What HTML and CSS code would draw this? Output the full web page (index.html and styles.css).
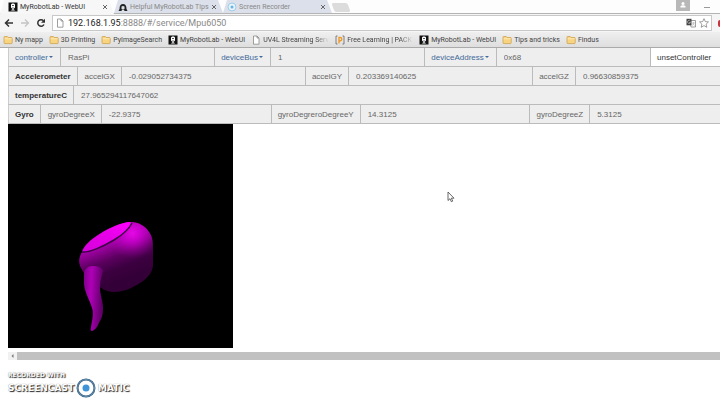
FILE: index.html
```html
<!DOCTYPE html>
<html lang="en">

<head>
    <meta charset="UTF-8">
    <meta name="viewport" content="width=device-width, initial-scale=1.0">
    <title>MyRobotLab - WebUI</title>

    <link rel="stylesheet" href="styles.css">
</head>

<body>
    <!-- shared icons -->
    <svg class="defs" width="0" height="0">
        <symbol id="folder" viewBox="0 0 10 10">
            <path d="M1 2.2q0-.7.7-.7h2.6l.9 1h3.2q.8 0 .8.8v4.500q0 .8-.8.8H1.8Q1 8.600 1 7.800z" fill="#f8d480" stroke="#c99a45" stroke-width=".7" />
            <path d="M1.600 3.800h7" stroke="#fff0c0" stroke-width=".8" />
        </symbol>
        <symbol id="robot" viewBox="0 0 10 10">
            <path d="M.5.5h9v9h-9z" fill="#111" />
            <path d="M4 1.500h2l1 1v3L6 6.500v1l1 1H3l1-1v-1L3 5.500v-3z" fill="#fff" />
            <path d="M4 3h.7v1H4zM5.300 3H6v1h-.7zM4.700 5h.6v3h-.6z" fill="#111" />
        </symbol>
        <symbol id="page" viewBox="0 0 10 10">
            <path d="M2.500 1h3.500l2 2v6.200h-5.500zM6 1v2h2" fill="#fff" stroke="#888" stroke-width=".8" />
        </symbol>
    </svg>

    <header class="browser">
        <div class="tabs">
            <a class="tab active" href="#">
                <svg class="icon"><use href="#robot" /></svg>
                <span>MyRobotLab - WebUI</span>
                <svg class="close" viewBox="0 0 6 6"><path d="M1 1l4 4M5 1L1 5" /></svg>
            </a>
            <a class="tab" href="#">
                <svg class="icon" viewBox="0 0 10 10">
                    <path d="M1.500 7Q1.500 2 5 2t3.500 5l1 2H6.500L6 7.500H4L3.500 9H.5z" fill="#222" />
                    <path d="M3.500 4.500Q5 3.500 6.500 4.500V7h-3z" fill="#dce0ea" />
                </svg>
                <span>Helpful MyRobotLab Tips</span>
                <svg class="close" viewBox="0 0 6 6"><path d="M1 1l4 4M5 1L1 5" /></svg>
            </a>
            <a class="tab" href="#">
                <svg class="icon" viewBox="0 0 10 10">
                    <circle cx="5" cy="5" r="4" fill="#e7f3fb" stroke="#8cc4e8" stroke-width=".8" />
                    <circle cx="5" cy="5" r="1.500" fill="#6bb2e2" />
                </svg>
                <span>Screen Recorder</span>
                <svg class="close" viewBox="0 0 6 6"><path d="M1 1l4 4M5 1L1 5" /></svg>
            </a>
            <button class="new-tab" aria-label="New tab"></button>
            <div class="window-buttons">
                <button class="user" aria-label="User">
                    <svg viewBox="0 0 14 11"><circle cx="7" cy="3.500" r="1.500" fill="#fff" /><path d="M4.500 7.500V6.500Q5 5.200 7 5.200t2.500 1.300v1z" fill="#fff" /></svg>
                </button>
                <button class="minimize" aria-label="Minimize"></button>
            </div>
        </div>

        <div class="toolbar">
            <button aria-label="Back"><svg viewBox="0 0 10 10"><path d="M9 5H1.500M5 1.500L1.500 5 5 8.500" fill="none" stroke="#333" stroke-width="1.500" /></svg></button>
            <button aria-label="Forward"><svg viewBox="0 0 10 10"><path d="M1 5h7.500M5 1.500L8.500 5 5 8.500" fill="none" stroke="#c4c4c4" stroke-width="1.300" /></svg></button>
            <button aria-label="Reload"><svg viewBox="0 0 10 10"><path d="M8 6.500A3.300 3.300 0 1 1 7.500 2.700" fill="none" stroke="#333" stroke-width="1.500" /><path d="M9 .8v4H5z" fill="#333" /></svg></button>
            <div class="address">
                <svg class="icon"><use href="#page" /></svg>
                <div class="url" role="textbox" aria-label="Address"><b>192.168.1.95</b>:8888/#/service/Mpu6050</div>
                <svg class="icon" viewBox="0 0 10 10">
                    <path d="M4 2.500h5.500v6.500H5z" fill="#fff" stroke="#777" stroke-width=".7" />
                    <path d="M.5.800h5v6.500h-5z" fill="#444" />
                    <path d="M4.500 3.200A1.600 1.600 0 1 0 4.600 4.500H3M6 5h3M7.500 4v1q0 2-1.500 2.500M6.800 5.500l1.700 2" fill="none" stroke="#bbb" stroke-width=".7" />
                </svg>
                <svg class="icon star" viewBox="0 0 10 10">
                    <path d="M5 .6l1.300 3 3.200.3-2.400 2.200.7 3.200L5 7.600 2.200 9.300l.7-3.200L.5 3.900l3.200-.3z" fill="#fff" stroke="#777" stroke-width=".7" />
                </svg>
            </div>
            <button class="extension" aria-label="Extension"></button>
        </div>

        <nav class="bookmarks">
            <a href="#"><svg class="icon"><use href="#folder" /></svg>Ny mapp</a>
            <a href="#"><svg class="icon"><use href="#folder" /></svg>3D Printing</a>
            <a href="#"><svg class="icon"><use href="#folder" /></svg>PyImageSearch</a>
            <a href="#"><svg class="icon"><use href="#robot" /></svg>MyRobotLab - WebUI</a>
            <a href="#"><svg class="icon"><use href="#page" /></svg><span class="fade">UV4L Streaming Serve</span></a>
            <a href="#">
                <svg class="icon" viewBox="0 0 10 10">
                    <path d="M2.500 1H1v8h1.500M7.500 1H9v8H7.500" fill="none" stroke="#666" stroke-width=".8" />
                    <path d="M4 8.500v-6h1.200a1.600 1.600 0 0 1 0 3.200H4" fill="none" stroke="#ee9a2b" stroke-width="1.400" />
                </svg>
                <span class="fade">Free Learning | PACKT</span>
            </a>
            <a href="#"><svg class="icon"><use href="#robot" /></svg>MyRobotLab - WebUI</a>
            <a href="#"><svg class="icon"><use href="#folder" /></svg>Tips and tricks</a>
            <a href="#"><svg class="icon"><use href="#folder" /></svg>Findus</a>
        </nav>
    </header>

    <main class="service">
        <div class="panel">
            <div class="row">
                <button class="dropdown" id="controller">controller</button>
                <input type="text" aria-labelledby="controller" value="RasPi">
                <button class="dropdown" id="deviceBus">deviceBus</button>
                <input type="text" aria-labelledby="deviceBus" value="1">
                <button class="dropdown" id="deviceAddress">deviceAddress</button>
                <input type="text" aria-labelledby="deviceAddress" value="0x68">
                <button class="unset">unsetController</button>
            </div>
            <div class="row">
                <strong>Accelerometer</strong>
                <label for="gx">accelGX</label>
                <input type="text" id="gx" value="-0.029052734375">
                <label for="gy">accelGY</label>
                <input type="text" id="gy" value="0.203369140625">
                <label for="gz">accelGZ</label>
                <input type="text" id="gz" value="0.96630859375">
            </div>
            <div class="row">
                <label for="temp"><b>temperatureC</b></label>
                <input type="text" id="temp" value="27.965294117647062">
            </div>
            <div class="row">
                <strong>Gyro</strong>
                <label for="dx">gyroDegreeX</label>
                <input type="text" id="dx" value="-22.9375">
                <label for="dy">gyroDegreroDegreeY</label>
                <input type="text" id="dy" value="14.3125">
                <label for="dz">gyroDegreeZ</label>
                <input type="text" id="dz" value="5.3125">
            </div>
        </div>

        <svg class="scene" viewBox="0 0 225 224">
            <defs>
                <linearGradient id="body" x1=".3" y1=".1" x2=".6" y2=".85">
                    <stop offset="0" stop-color="#a800a8" />
                    <stop offset=".3" stop-color="#a000a4" />
                    <stop offset=".55" stop-color="#5c0060" />
                    <stop offset=".75" stop-color="#3c0040" />
                    <stop offset="1" stop-color="#330037" />
                </linearGradient>
                <radialGradient id="shine" cx=".72" cy=".16" r=".36" gradientTransform="rotate(-18 .72 .16)">
                    <stop offset="0" stop-color="#e808e8" />
                    <stop offset=".4" stop-color="#d000d4" stop-opacity=".7" />
                    <stop offset="1" stop-color="#a000a4" stop-opacity="0" />
                </radialGradient>
                <linearGradient id="lid" x1="0" y1="1" x2="1" y2="0">
                    <stop offset="0" stop-color="#d800dc" />
                    <stop offset=".5" stop-color="#e400e6" />
                    <stop offset="1" stop-color="#ff00ff" />
                </linearGradient>
                <linearGradient id="spout" x1="0" y1="0" x2="1" y2=".15">
                    <stop offset="0" stop-color="#80008a" />
                    <stop offset=".4" stop-color="#b000b8" />
                    <stop offset="1" stop-color="#600068" />
                </linearGradient>
            </defs>
            <rect width="225" height="224" fill="#000" />
            <path d="M74 128C82 114 104 101 121 98C132 98 138 103 141 108C145 113 145 119 145 127V142C144 149 140 153 135 157C128 162 120 166 114 167C106 169 98 168 92 163C84 158 76 151 73 144C70 138 71 133 74 128Z" fill="url(#body)" />
            <path d="M74 128C82 114 104 101 121 98C132 98 138 103 141 108C145 113 145 119 145 127V142C144 149 140 153 135 157C128 162 120 166 114 167C106 169 98 168 92 163C84 158 76 151 73 144C70 138 71 133 74 128Z" fill="url(#shine)" />
            <path d="M74 128C76 117 104 100 121 98C126 99 121 106 106 116C96 122 81 129 74 128Z" fill="url(#lid)" />
            <path d="M74 128C81 129 96 122 106 116C116 110 121 105 124 99" fill="none" stroke="#3c0044" stroke-width="1.500" />
            <path d="M76 150C76 145 80 142 85 142C90 142 95 144 95 147C94 151 92 157 92 163C92 171 95 177 95 184C95 190 94 194 92 197C90 201 88 206 84 207Q82 207 83 203C84 197 86 190 84 184C82 176 76 168 76 159Z" fill="url(#spout)" />
        </svg>

        <div class="scrollbar">
            <button aria-label="Scroll left"><svg viewBox="0 0 8 8"><path d="M5 2L3 4l2 2z" fill="#777" /></svg></button>
            <div class="thumb"></div>
        </div>
    </main>

    <footer class="watermark">
        <div class="recorded">RECORDED WITH</div>
        <div class="brand">
            <span>SCREENCAST</span>
            <svg viewBox="0 0 20 20">
                <circle cx="10" cy="10" r="8.500" fill="#fff" stroke="#35597a" stroke-width="2" />
                <circle cx="10" cy="10" r="8.500" fill="none" stroke="#75a9cc" stroke-width=".7" />
                <circle cx="10" cy="10" r="3.500" fill="#3f94d8" />
            </svg>
            <span>MATIC</span>
        </div>
    </footer>

    <svg class="cursor" viewBox="0 0 8 12">
        <path d="M1 1v8.500l2-1.800 1.300 3 1.400-.6-1.300-2.900H7z" fill="#fff" stroke="#444" stroke-width=".8" />
    </svg>
</body>

</html>
```
FILE: styles.css
```css
* {
    margin: 0;
    padding: 0;
    box-sizing: border-box;
}

body {
    background: #fff;
    font-family: "Liberation Sans", Arial, sans-serif;
    font-size: 8px;
    color: #666;
    overflow: hidden;
}

button,
input {
    font: inherit;
    color: inherit;
    border: none;
    background: none;
}

a {
    color: inherit;
    text-decoration: none;
}

svg {
    display: block;
    flex: none;
}

.defs,
.cursor {
    position: absolute;
}

.icon {
    width: 10px;
    height: 10px;
}

/* browser window */
.browser {
    font-family: Roboto, "Noto Sans", sans-serif;
    color: #444;
}

.tabs {
    display: flex;
    height: 14px;
    border-bottom: 1px solid #b4b4b4;
    background: #fdfdfd;
}

.tab {
    display: flex;
    align-items: center;
    gap: 2px;
    width: 109px;
    padding: 0 6px 0 4px;
    background: #dce0ea;
    color: #888;
    font-size: 7px;
    clip-path: polygon(4px 0, calc(100% - 5px) 0, 100% 100%, 0 100%);
}

.tab.active {
    width: 114px;
    height: 14px;
    padding-left: 8px;
    background: #f7f7f7;
    color: #333;
}

.tab span {
    flex: 1;
    white-space: nowrap;
}

.close {
    width: 6px;
    height: 6px;
    stroke: #666;
}

.new-tab {
    width: 16px;
    height: 9px;
    margin: 3px 0 0 1px;
    background: #dcdcdc;
    border-radius: 2px;
    transform: skewX(20deg);
}

.window-buttons {
    display: flex;
    gap: 14px;
    margin-left: auto;
    padding-right: 10px;
}

.user {
    width: 14px;
    height: 11px;
    background: #b8b8b8;
}

.minimize {
    width: 6px;
    height: 8px;
    border-bottom: 1px solid #999;
}

.toolbar {
    display: flex;
    align-items: center;
    gap: 6px;
    height: 18px;
    padding-left: 4px;
    background: #f5f5f5;
}

.toolbar button svg {
    width: 10px;
    height: 10px;
}

.address {
    display: flex;
    align-items: center;
    flex: 1;
    gap: 3px;
    height: 16px;
    padding: 0 2px;
    background: #fff;
    border: 1px solid #c8c8c8;
}

.url {
    flex: 1;
    font-size: 9px;
    color: #888;
}

.url b {
    font-weight: normal;
    color: #222;
}

.toolbar .extension {
    width: 2px;
    height: 7px;
    background: #c8323c;
    border-radius: 2px 0 0 2px;
}

.bookmarks {
    display: flex;
    align-items: center;
    gap: 6px;
    height: 16px;
    padding-left: 3px;
    background: linear-gradient(#efefef, #dedede);
    border-bottom: 1px solid #aaa;
    font-size: 7px;
    white-space: nowrap;
}

.bookmarks a {
    display: flex;
    align-items: center;
    gap: 2px;
}

.fade {
    width: 66px;
    -webkit-mask-image: linear-gradient(to right, #000 80%, transparent);
    mask-image: linear-gradient(to right, #000 80%, transparent);
}

/* Mpu6050 service */
.service {
    padding-left: 8px;
    overflow: hidden;
}

.panel {
    width: calc(100% + 40px);
}

.row {
    display: flex;
    height: 19px;
    border-left: 1px solid #ccc;
    border-bottom: 1px solid #bbb;
    background: #eee;
}

.row > * {
    display: flex;
    align-items: center;
    padding: 0 6px;
    border-right: 1px solid #bbb;
    white-space: nowrap;
}

.row input {
    flex: 1;
    width: 0;
    min-width: 0;
    padding-left: 7px;
}

.row strong + label {
    padding-left: 7px;
}

.row strong,
.row b {
    color: #333;
}

.row .dropdown {
    color: #41699a;
}

.dropdown::after {
    content: "";
    margin: 0 1px;
    border: 2px solid transparent;
    border-top-color: #41699a;
    border-bottom: 0;
}

.row .unset {
    width: 109px;
    background: #fff;
    color: #333;
}

.scene {
    width: 225px;
    height: 224px;
}

.scrollbar {
    display: flex;
    height: 8px;
    margin-top: 4px;
    background: #f1f1f1;
}

.scrollbar svg {
    width: 9px;
    height: 8px;
}

.thumb {
    flex: 1;
    background: #c1c1c1;
}

/* recorder logo */
.watermark {
    padding: 12px 8px;
    font-family: "DejaVu Sans", sans-serif;
    font-weight: bold;
    color: #fff;
    text-shadow: 1px 1px 1px #222, 0 0 1px #777;
}

.recorded {
    font-size: 6px;
    line-height: 6px;
}

.brand {
    display: flex;
    align-items: center;
    gap: 2px;
    font-size: 9px;
}

.brand svg {
    width: 20px;
    height: 20px;
}

.cursor {
    left: 447px;
    top: 191px;
    width: 8px;
    height: 12px;
}
```
